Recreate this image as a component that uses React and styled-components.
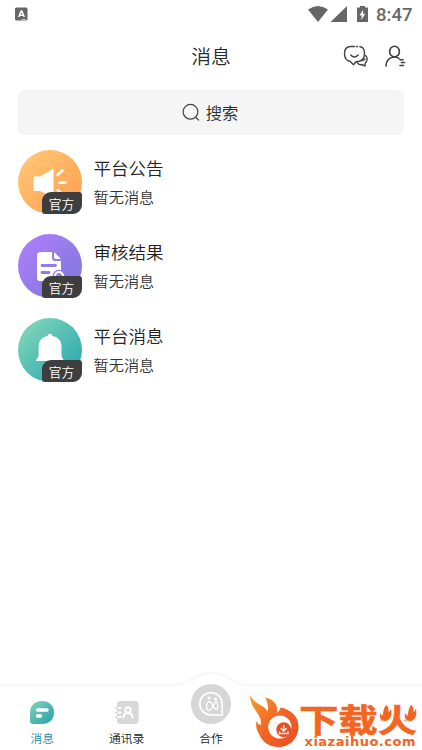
import React from "react";
import styled, { createGlobalStyle } from "styled-components";

const Global = createGlobalStyle`
  * { box-sizing: border-box; }
  body { margin: 0; background: #fff; overflow: hidden; font-family: "Noto Sans CJK SC", sans-serif; font-weight: 350; color: #2b2b2b; }
  svg { display: block; flex: none; }
`;
const Screen = styled.div`
  position: relative; width: 422px; height: 750px; overflow: hidden;
  display: flex; flex-direction: column; background: #fff;
`;
const StatusBar = styled.div`
  height: 28px; flex: none; display: flex; align-items: center; justify-content: space-between;
  padding: 0 9px 0 15px;
`;
const StatusRight = styled.div`display: flex; align-items: center;`;
const Clock = styled.span`
  font: 500 18.5px/28px Roboto, sans-serif; color: #686868; margin-left: 7px; width: 37px; padding-top: 1px;
`;
const Header = styled.header`
  height: 62px; flex: none; display: grid; grid-template-columns: 80px 1fr 80px;
  padding: 0 17px; align-items: start;
`;
const Title = styled.h1`
  grid-column: 2; margin: 13px 0 0; text-align: center; font-size: 19.8px; line-height: 30px; font-weight: 350;
`;
const Actions = styled.div`display: flex; gap: 16px; padding: 17px 0 0 17.5px;`;
const Search = styled.div`
  margin: 0 18px; height: 45px; flex: none; border-radius: 6px; background: #f5f5f5;
  display: flex; align-items: center; justify-content: center; gap: 6px; font-size: 16.3px; line-height: 24px;
  padding: 0 2px 1px 0;
`;
const List = styled.main`flex: 1; display: flex; flex-direction: column; gap: 20px; padding: 15px 18px 0 17.5px;`;
const Row = styled.article`display: flex; gap: 12px; height: 64px;`;
const Avatar = styled.div`
  position: relative; width: 64px; height: 64px; border-radius: 50%; flex: none;
  background: linear-gradient(135deg, ${p => p.$from}, ${p => p.$to});
`;
const Badge = styled.span`
  position: absolute; right: 0; bottom: 0; width: 40px; height: 22px; background: #3e3e3e; color: #fff;
  border-radius: 9px 3px 9px 3px; font-size: 12.7px; line-height: 24px; text-align: center;
`;
const Copy = styled.div`display: flex; flex-direction: column; padding-top: 4px;`;
const Name = styled.div`font-size: 17.5px; line-height: 27px; color: #222;`;
const Preview = styled.div`font-size: 15.2px; line-height: 23px; margin-top: 4px; color: #333;`;
const TabBar = styled.nav`
  position: relative; height: 78px; flex: none; display: grid; grid-template-columns: repeat(5, 84.4px);
`;
const BarShape = styled.svg`position: absolute; left: 0; top: 0;`;
const Tab = styled.div`
  position: relative; display: flex; flex-direction: column; align-items: center;
  padding-top: ${p => (p.$raised ? 12 : 29)}px; gap: 5px;
  color: ${p => (p.$active ? "#1c91a4" : "#222")}; font-size: 11.8px; line-height: 18px;
`;
const Watermark = styled.div`
  position: absolute; left: 248px; bottom: 0; width: 174px; height: 58px; display: flex; color: #f26522;
`;
const Brand = styled.div`position: relative; display: flex; flex-direction: column; align-items: flex-start;`;
const BrandName = styled.div`
  font-size: 32px; line-height: 32px; height: 32px; margin-top: 10px; font-weight: 700; white-space: nowrap;
  margin-left: -1px; transform: scaleX(1.23); transform-origin: left; -webkit-text-stroke: 0.6px #f26522;
`;
const BrandUrl = styled.div`
  font: 700 13px/14px "DejaVu Sans", sans-serif; letter-spacing: 0.5px; margin: 1px 0 0 4.5px; white-space: nowrap;
`;
const Sparks = styled.svg`position: absolute; left: 79px; top: 11px;`;

const Speaker = () => (
  <svg width="64" height="64" viewBox="0 0 64 64">
    <path d="M16 27h6l13-7.500v28l-13-7h-6z" fill="#fff" stroke="#fff" strokeWidth="1" strokeLinejoin="round" />
    <path d="M39.500 25l5-4.500M41.500 32.500h6M39.500 40l5 4" stroke="#fff" strokeWidth="2.400" strokeLinecap="round" />
  </svg>
);
const Document = () => (
  <svg width="64" height="64" viewBox="0 0 64 64">
    <path d="M22.500 18H34v6q0 3 3 3h6v20H22q-3 0-3-3V22q0-4 3.500-4z" fill="#fff" />
    <path d="M36 18l7 7h-5q-2 0-2-2z" fill="#fff" />
    <path d="M24 31.500h13.500M24 38.500h7" stroke="#967be7" strokeWidth="2.800" strokeLinecap="round" />
    <circle cx="41" cy="42" r="6.300" fill="#967be7" />
    <circle cx="41" cy="42" r="4" fill="none" stroke="#fff" strokeWidth="2.200" />
  </svg>
);
const Bell = () => (
  <svg width="64" height="64" viewBox="0 0 64 64">
    <path d="M29.500 18c.4-3 4.600-3 5 0C40.500 19 43.500 23.500 43.500 29v8c0 2 1 3 2 4.500.5 1 0 1.500-1 1.500H19c-.8 0-1.200-.8-.6-1.600 1.200-1.500 2.200-2.500 2.200-4.500v-8c0-5.500 3-9.900 8.900-10.900z" fill="#fff" />
  </svg>
);
const items = [
  { name: "平台公告", from: "#ffcb78", to: "#ff9a4e", Icon: Speaker },
  { name: "审核结果", from: "#b17fff", to: "#7b76d5", Icon: Document },
  { name: "平台消息", from: "#88dbb9", to: "#23a2af", Icon: Bell },
];

export default function App() {
  return (
    <Screen>
      <Global />
      <StatusBar>
        <svg width="13" height="14" viewBox="0 0 13 14">
          <rect y="0.500" width="12.500" height="13" rx="1.500" fill="#666" />
          <path d="M3.700 10l2.500-6h.6l2.500 6M4.700 8.200h3.600" fill="none" stroke="#fff" strokeWidth="1.500" />
          <path d="M6.500 12.500h4.500" stroke="#ddd" strokeWidth=".8" />
        </svg>
        <StatusRight>
          <svg width="61" height="18" viewBox="0 0 61 18">
            <path d="M0 4.500Q10-2.500 20 4.500L10 17z" fill="#666" />
            <path d="M22.500 17L39 1v16z" fill="#666" />
            <path d="M49 2.500h3V1h5v1.500h3V17H49z" fill="#666" />
            <path d="M55.200 4.500l-3.700 6h2.300l-.5 4.500 4-6.300H55z" fill="#fff" />
          </svg>
          <Clock>8:47</Clock>
        </StatusRight>
      </StatusBar>
      <Header>
        <Title>消息</Title>
        <Actions>
          <svg width="26" height="23" viewBox="0 0 26 23" fill="none" stroke="#444" strokeWidth="1.400" strokeLinecap="round" strokeLinejoin="round">
            <path d="M11.500 1.500H7.500C3.500 1.500 1.500 4.500 1.500 8.500s2 7.300 5.800 8l3.200 3.300 2.500-3c5 0 8.500-2.500 8.500-8 0-4-1.500-7-4.500-7M13.500 1.500h1" />
            <path d="M7.800 10q3.500 4 7.400 0M22.500 10.500c2.500 2 2 5.500-.2 7.300l-.3 3.200-3-1.500c-2 .5-4-.2-5-2M18.500 15.500c1.500 0 3-.5 3.500-1.500" />
          </svg>
          <svg width="22" height="23" viewBox="0 0 22 23" fill="none" stroke="#3c3c3c" strokeWidth="1.600" strokeLinecap="round">
            <ellipse cx="9.500" cy="6.500" rx="4.900" ry="5.200" />
            <path d="M1 21c0-5.500 3.500-9 8.500-9 2 0 3.300.5 4.500 1.500M15 14.700h3M16.500 17.500h3M15 20.500h3.500" />
          </svg>
        </Actions>
      </Header>
      <Search>
        <svg width="18" height="18" viewBox="0 0 18 18" fill="none" stroke="#444" strokeWidth="1.200" strokeLinecap="round">
          <circle cx="8.500" cy="8.800" r="7.400" /><path d="M13.800 14.300l2.700 2.700" />
        </svg>
        搜索
      </Search>
      <List>
        {items.map(({ name, from, to, Icon }) => (
          <Row key={name}>
            <Avatar $from={from} $to={to}><Icon /><Badge>官方</Badge></Avatar>
            <Copy><Name>{name}</Name><Preview>暂无消息</Preview></Copy>
          </Row>
        ))}
      </List>
      <TabBar>
        <BarShape width="422" height="78" viewBox="0 0 422 78">
          <path d="M-2 13H174C191 13 192 1 211 1S231 13 248 13H424V80H-2z" fill="#fff" stroke="#f8f8f8" strokeWidth="2.500" />
        </BarShape>
        <Tab $active>
          <svg width="24" height="23" viewBox="0 0 24 23">
            <defs><linearGradient id="msg" x1="0" y1="0" x2="1" y2="1"><stop stopColor="#82d5b6" /><stop offset="1" stopColor="#259faf" /></linearGradient></defs>
            <path d="M12 0c7 0 12 4.500 12 11.500S19 23 12 23H3q-3 0-3-3v-8.500C0 4.500 5 0 12 0z" fill="url(#msg)" />
            <path d="M7.500 9h9.500M7.500 15h3" stroke="#fff" strokeWidth="3.400" strokeLinecap="round" />
          </svg>
          消息
        </Tab>
        <Tab>
          <svg width="24" height="23" viewBox="0 0 24 23">
            <rect x="2" width="21.500" height="23" rx="3.500" fill="#d8d8d8" />
            <g fill="none" stroke="#fff" strokeWidth="2" strokeLinecap="round">
              <path d="M0 7h5.500M0 11.500h5.500M0 16h5.500" /><circle cx="13" cy="9" r="2.700" /><path d="M8.500 16.500q0-4.500 4.500-4.500t4.500 4.500" />
            </g>
            <path d="M0 7h3M0 11.500h3M0 16h3" stroke="#d8d8d8" strokeWidth="1.400" />
          </svg>
          通讯录
        </Tab>
        <Tab $raised>
          <svg width="40" height="40" viewBox="0 0 40 40">
            <circle cx="20" cy="20" r="20" fill="#d6d6d6" />
            <g fill="none" stroke="#fff" strokeWidth="1.700" strokeLinecap="round" strokeLinejoin="round">
              <path d="M20 31a11.200 11.200 0 1 1 11.200-11.200V31z" />
              <path d="M18 17.500c-3.500 2-3 9 0 9 3.500 0 4.500-9 7.500-9 2 2 1.500 8-.5 8-2.500 0-3.500-8-7-8" strokeWidth="1.300" />
            </g>
            <circle cx="18" cy="14" r="1.600" fill="#fff" /><circle cx="24.500" cy="15" r="1.500" fill="#fff" />
          </svg>
          合作
        </Tab>
      </TabBar>
      <Watermark>
        <svg width="52" height="58" viewBox="0 0 52 58">
          <defs><linearGradient id="fire" x1="0" y1="0" x2="1" y2="1"><stop stopColor="#f99b28" /><stop offset=".5" stopColor="#f26527" /><stop offset="1" stopColor="#e94b20" /></linearGradient></defs>
          <path d="M2 3C5 9 9 11 13 13.500 18 16 19 18 19 20c2-4 1-9-2-14.500 7 1.500 11 5 12 10.500q.5 3-.5 5c2-1 3.500-3 4-5.500C42 17 50.500 24 50.500 34.500 50.500 46 42 55 31 55 20 55 14 49 11 42 8.500 38 7.500 34 8.500 29q1 3 4 4C14 28 11.500 24 8 19 4.500 14 2 9 2 3z" fill="url(#fire)" />
          <circle cx="31.800" cy="35" r="11.600" fill="#fff" />
          <circle cx="35.700" cy="37.700" r="7.400" fill="#e94e23" />
          <path d="M35.700 33.500v5m-3-2.300l3 2.800 3-2.800M31.500 39.500v2h8.500v-2" fill="none" stroke="#fff" strokeWidth="1.400" />
        </svg>
        <Brand>
          <BrandName>下载火</BrandName>
          <BrandUrl>xiazaihuo.com</BrandUrl>
          <Sparks width="40" height="22" viewBox="0 0 40 22" fill="#f26522" stroke="#fff" strokeWidth="2" paintOrder="stroke">
            <path d="M7 2c4 3 1.500 5 3 7l2-3c1.500 6-1 12-6 12-4 0-6-3-5-8l2 3C5 10 3.500 7 7 2z" />
            <path d="M32 2c4 3 1.500 5 3 7l2-3c1.500 6-1 12-6 12-4 0-6-3-5-8l2 3C30 10 28.500 7 32 2z" />
          </Sparks>
        </Brand>
      </Watermark>
    </Screen>
  );
}
